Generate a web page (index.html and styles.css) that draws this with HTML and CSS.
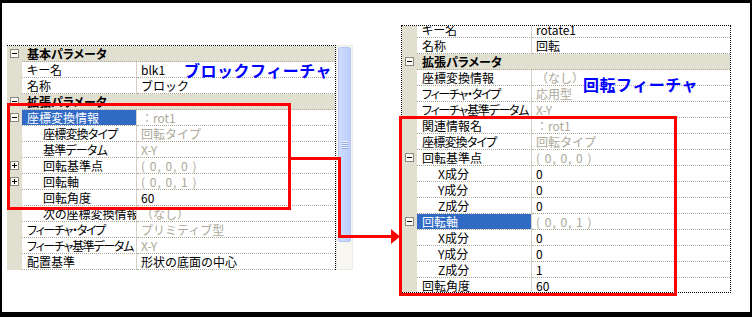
FILE: index.html
```html
<!DOCTYPE html>
<html lang="ja">
<head>
    <meta charset="UTF-8">
    <title>回転フィーチャ</title>
    <link rel="stylesheet" href="styles.css">
</head>
<body>
    <div class="frame">
        <div class="panel panel-left">
            <div class="grid grid-left">
                <div class="row head"><span class="gut"><i class="box minus"></i></span><span class="cat">基本パラメータ</span></div>
                <div class="row"><span class="gut"></span><span class="name">キー名</span><span class="val">blk1</span></div>
                <div class="row"><span class="gut"></span><span class="name">名称</span><span class="val">ブロック</span></div>
                <div class="row head"><span class="gut"><i class="box minus"></i></span><span class="cat">拡張パラメータ</span></div>
                <div class="row sel"><span class="gut"><i class="box minus"></i></span><span class="name">座標変換情報</span><span class="val dim">：rot1</span></div>
                <div class="row sub"><span class="gut"></span><span class="name tight">座標変換タイプ</span><span class="val dim">回転タイプ</span></div>
                <div class="row sub"><span class="gut"></span><span class="name tight">基準データム</span><span class="val dim">X-Y</span></div>
                <div class="row sub"><span class="gut"><i class="box plus"></i></span><span class="name">回転基準点</span><span class="val dim coord">( 0, 0, 0 )</span></div>
                <div class="row sub"><span class="gut"><i class="box plus"></i></span><span class="name">回転軸</span><span class="val dim coord">( 0, 0, 1 )</span></div>
                <div class="row sub"><span class="gut"></span><span class="name">回転角度</span><span class="val">60</span></div>
                <div class="row sub"><span class="gut"></span><span class="name">次の座標変換情報</span><span class="val dim">（なし）</span></div>
                <div class="row"><span class="gut"></span><span class="name tighter">フィーチャ・タイプ</span><span class="val dim">プリミティブ型</span></div>
                <div class="row"><span class="gut"></span><span class="name tighter">フィーチャ基準データム</span><span class="val dim">X-Y</span></div>
                <div class="row"><span class="gut"></span><span class="name">配置基準</span><span class="val">形状の底面の中心</span></div>
                <div class="note note-left">ブロックフィーチャ</div>
            </div>
            <div class="scroll">
                <div class="thumb"><span class="grip"></span></div>
            </div>
        </div>

        <div class="panel panel-right">
            <div class="grid grid-right">
                <div class="rows">
                    <div class="row"><span class="gut"></span><span class="name">キー名</span><span class="val">rotate1</span></div>
                    <div class="row"><span class="gut"></span><span class="name">名称</span><span class="val">回転</span></div>
                    <div class="row head"><span class="gut"><i class="box minus"></i></span><span class="cat">拡張パラメータ</span></div>
                    <div class="row"><span class="gut"></span><span class="name">座標変換情報</span><span class="val dim">（なし）</span></div>
                    <div class="row"><span class="gut"></span><span class="name tighter">フィーチャ・タイプ</span><span class="val dim">応用型</span></div>
                    <div class="row"><span class="gut"></span><span class="name tighter">フィーチャ基準データム</span><span class="val dim">X-Y</span></div>
                    <div class="row"><span class="gut"></span><span class="name">関連情報名</span><span class="val dim">：rot1</span></div>
                    <div class="row"><span class="gut"></span><span class="name tight">座標変換タイプ</span><span class="val dim">回転タイプ</span></div>
                    <div class="row"><span class="gut"><i class="box minus"></i></span><span class="name">回転基準点</span><span class="val dim coord">( 0, 0, 0 )</span></div>
                    <div class="row sub"><span class="gut"></span><span class="name">X成分</span><span class="val">0</span></div>
                    <div class="row sub"><span class="gut"></span><span class="name">Y成分</span><span class="val">0</span></div>
                    <div class="row sub"><span class="gut"></span><span class="name">Z成分</span><span class="val">0</span></div>
                    <div class="row sel"><span class="gut"><i class="box minus"></i></span><span class="name">回転軸</span><span class="val dim coord">( 0, 0, 1 )</span></div>
                    <div class="row sub"><span class="gut"></span><span class="name">X成分</span><span class="val">0</span></div>
                    <div class="row sub"><span class="gut"></span><span class="name">Y成分</span><span class="val">0</span></div>
                    <div class="row sub"><span class="gut"></span><span class="name">Z成分</span><span class="val">1</span></div>
                    <div class="row"><span class="gut"></span><span class="name">回転角度</span><span class="val">60</span></div>
                </div>
                <div class="note note-right">回転フィーチャ</div>
            </div>
        </div>

        <!-- red callouts drawn over the grids -->
        <div class="mark mark-left"></div>
        <div class="mark mark-right"></div>
        <svg class="link" width="748" height="309" viewBox="0 0 748 309">
            <polyline points="289,155.5 337.5,155.5 337.5,233.5 391,233.5" fill="none" stroke="#ff0000" stroke-width="3"/>
            <polygon points="389,226 398,233.5 389,241" fill="#ff0000"/>
        </svg>
    </div>
</body>
</html>
```

FILE: styles.css
```css
* {
    box-sizing: border-box;
}
body {
    margin: 0;
    background: #fff;
    font-family: "Noto Sans CJK JP", sans-serif;
    font-size: 12px;
    color: #000;
}
.frame {
    position: relative;
    width: 752px;
    height: 317px;
    border: solid #000;
    border-width: 3px 2px 5px 2px;
    background: #fff;
    display: flex;
    align-items: flex-start;
}
.panel-left {
    display: flex;
    margin: 42px 0 0 5px;
}
.panel-right {
    margin: 22px 0 0 48px;
}
.grid {
    position: relative;
    overflow: hidden;
    width: 329px;
}
.grid-left {
    border-top: 1px dotted #000;
    border-right: 1px dotted #000;
}
.grid-right {
    width: 330px;
    height: 268px;
    border: 1px dotted #000;
}
.grid-right .rows {
    margin-top: -4px;
}
.row {
    display: flex;
    height: 16px;
    line-height: 15px;
}
.gut {
    position: relative;
    width: 15px;
    flex: none;
    background: #e1dfd0;
}
.name {
    width: 115px;
    flex: none;
    padding-left: 5px;
    border-right: 1px solid #d4d0c8;
    border-bottom: 1px dotted #aca899;
    white-space: nowrap;
    overflow: hidden;
    font-feature-settings: "palt";
}
.tight {
    letter-spacing: -0.8px;
}
.tighter {
    letter-spacing: -1.3px;
}
.val {
    flex: 1;
    padding-left: 4px;
    border-bottom: 1px dotted #aca899;
    white-space: nowrap;
    overflow: hidden;
}
.coord {
    letter-spacing: 1px;
}
.cat {
    flex: 1;
    padding-left: 5px;
    background: #e1dfd0;
    font-weight: bold;
    border-bottom: 1px dotted #aca899;
    white-space: nowrap;
    font-feature-settings: "palt";
}
.sub .name {
    padding-left: 21px;
}
.dim {
    color: #aca899;
}
.sel .name {
    background: #316ac5;
    background-clip: padding-box;
    color: #fff;
}
.box {
    position: absolute;
    left: 3px;
    top: 3px;
    width: 9px;
    height: 9px;
    border: 1px solid #8c8a80;
    background: #fbfaf6;
}
.box::before {
    content: "";
    position: absolute;
    left: 1px;
    top: 3px;
    width: 5px;
    height: 1px;
    background: #000;
}
.plus::after {
    content: "";
    position: absolute;
    left: 3px;
    top: 1px;
    width: 1px;
    height: 5px;
    background: #000;
}
.scroll {
    width: 17px;
    height: 225px;
    padding: 1px;
    background: #f7f6f1;
    border: 1px solid #ecebe4;
}
.thumb {
    height: 195px;
    display: flex;
    align-items: center;
    justify-content: center;
    border: 1px solid #b4c6f2;
    border-radius: 2px;
    background: linear-gradient(to right, #cfdcfd, #bccffb);
}
.grip {
    width: 6px;
    height: 8px;
    background: repeating-linear-gradient(#f2f5fe 0 1px, #90a9e6 1px 2px);
}
.note {
    position: absolute;
    color: #0000ff;
    font-size: 16px;
    line-height: 16px;
    font-weight: bold;
    letter-spacing: 0.5px;
    white-space: nowrap;
}
.note-left {
    left: 177px;
    top: 16px;
}
.note-right {
    left: 181px;
    top: 50px;
}
.mark {
    position: absolute;
    border: 3px solid #ff0000;
}
.mark-left {
    left: 5px;
    top: 100px;
    width: 284px;
    height: 107px;
}
.mark-right {
    left: 397px;
    top: 113px;
    width: 278px;
    height: 180px;
}
.link {
    position: absolute;
    left: 0;
    top: 0;
}
```
